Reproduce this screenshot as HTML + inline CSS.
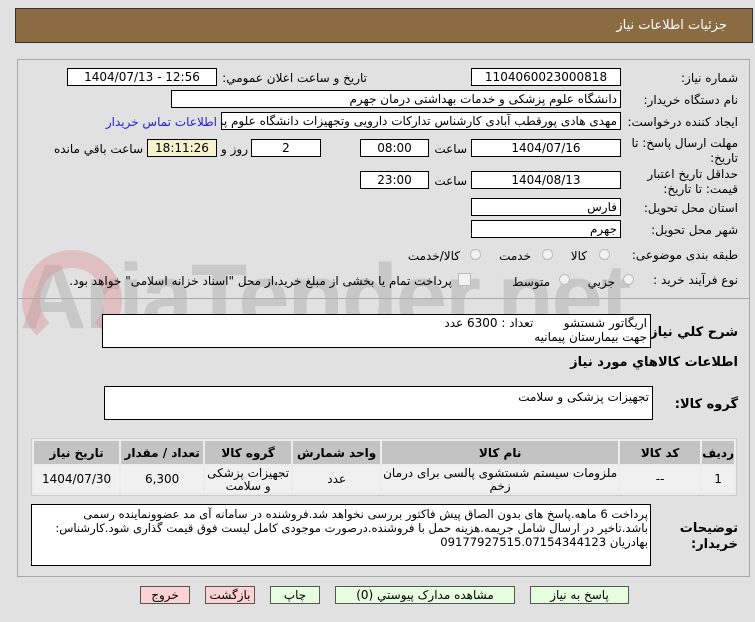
<!DOCTYPE html>
<html><head><meta charset="utf-8"><style>
*{box-sizing:border-box;margin:0;padding:0}
body{width:755px;height:622px;background:#e1e1e1;position:relative;overflow:hidden;font-family:Tahoma,"DejaVu Sans","Noto Sans CJK SC",sans-serif;font-size:12px;color:#000}
.a{position:absolute}
.box{position:absolute;background:#fff;border:1px solid #000;height:18px;line-height:16px;padding:0 3px;white-space:nowrap;overflow:hidden}
.c{text-align:center}.r{text-align:right;direction:rtl}
.l{position:absolute;direction:rtl;text-align:right;white-space:nowrap}
.btn{position:absolute;top:586px;height:18px;border:1px solid #555;background:#e6fde0;text-align:center;line-height:16px;direction:rtl}
.pink{background:#fcd2d2}
table{position:absolute;left:31px;top:438px;width:706px;border-collapse:separate;border-spacing:2px;background:#ececec;border:1px solid #ccc;direction:rtl}
th{background:#c3c3c3;height:23px;font-weight:bold;font-size:12px}
td{background:#f0f0f0;height:27px;text-align:center;line-height:13px}
.radio{position:absolute;width:11px;height:11px;border-radius:50%;border:1px solid #bbb;background:#f2f2f2}
</style></head><body>
<div class="a" style="left:15px;top:8px;width:738px;height:35px;background:#8b6b42;border:1px solid #333"></div>
<div class="l" style="right:28px;top:18px;color:#fff;font-size:13px">جزئيات اطلاعات نياز</div>
<div class="a" style="left:17px;top:59px;width:733px;height:518px;border:1px solid #aaa"></div>
<div class="a" style="left:18px;top:298px;width:731px;border-top:1px solid #aaa"></div>
<div class="a" style="left:20px;top:245px;font-family:'Liberation Sans',sans-serif;font-size:92px;font-weight:bold;color:rgba(175,175,175,.5);letter-spacing:-2px">AriaTender.net</div>
<div class="a" style="left:22px;top:250px;width:100px;height:100px;border:18px solid rgba(220,140,140,.4);border-radius:50%;border-bottom-color:transparent"></div>

<div class="l" style="right:17px;top:71px">شماره نياز:</div>
<div class="box c" style="left:471px;top:68px;width:150px">1104060023000818</div>
<div class="l" style="right:388px;top:71px">تاريخ و ساعت اعلان عمومي:</div>
<div class="box c" style="left:67px;top:68px;width:150px">1404/07/13 - 12:56</div>

<div class="l" style="right:17px;top:93px">نام دستگاه خريدار:</div>
<div class="box r" style="left:171px;top:90px;width:450px">دانشگاه علوم پزشکی و خدمات بهداشتی  درمان جهرم</div>

<div class="l" style="right:17px;top:115px">ايجاد کننده درخواست:</div>
<div class="box r" style="left:221px;top:112px;width:400px">مهدی هادی پورقطب آبادی کارشناس تدارکات دارویی وتجهیزات دانشگاه علوم پزشکی</div>
<div class="l" style="right:538px;top:115px;color:#2222dd">اطلاعات تماس خريدار</div>

<div class="l" style="right:17px;top:136px;line-height:15px">مهلت ارسال پاسخ: تا<br>تاريخ:</div>
<div class="box c" style="left:471px;top:139px;width:150px">1404/07/16</div>
<div class="l" style="right:288px;top:142px">ساعت</div>
<div class="box c" style="left:360px;top:139px;width:69px">08:00</div>
<div class="box c" style="left:251px;top:139px;width:70px">2</div>
<div class="l" style="right:507px;top:142px">روز و</div>
<div class="box c" style="left:147px;top:139px;width:70px;background:#f5f2cc">18:11:26</div>
<div class="l" style="right:612px;top:142px">ساعت باقي مانده</div>

<div class="l" style="right:17px;top:167px;line-height:15px">حداقل تاريخ اعتبار<br>قيمت: تا تاريخ:</div>
<div class="box c" style="left:471px;top:171px;width:150px">1404/08/13</div>
<div class="l" style="right:288px;top:174px">ساعت</div>
<div class="box c" style="left:360px;top:171px;width:69px">23:00</div>

<div class="l" style="right:17px;top:201px">استان محل تحويل:</div>
<div class="box r" style="left:471px;top:198px;width:150px">فارس</div>
<div class="l" style="right:17px;top:223px">شهر محل تحويل:</div>
<div class="box r" style="left:471px;top:220px;width:150px">جهرم</div>

<div class="l" style="right:17px;top:248px">طبقه بندی موضوعی:</div>
<div class="radio" style="left:599px;top:249px"></div><div class="l" style="right:168px;top:249px">کالا</div>
<div class="radio" style="left:542px;top:249px"></div><div class="l" style="right:224px;top:249px">خدمت</div>
<div class="radio" style="left:470px;top:249px"></div><div class="l" style="right:295px;top:249px">کالا/خدمت</div>

<div class="l" style="right:17px;top:273px">نوع فرآيند خريد :</div>
<div class="radio" style="left:623px;top:274px"></div><div class="l" style="right:140px;top:275px">جزيي</div>
<div class="radio" style="left:559px;top:274px"></div><div class="l" style="right:205px;top:275px">متوسط</div>
<div class="a" style="left:458px;top:273px;width:13px;height:13px;border:1px solid #bbb;background:#f2f2f2"></div>
<div class="l" style="right:303px;top:274px">پرداخت تمام يا بخشی از مبلغ خريد،از محل "اسناد خزانه اسلامی" خواهد بود.</div>

<div class="l" style="right:17px;top:325px;font-weight:bold;font-size:13px">شرح کلي نياز:</div>
<div class="box r" style="left:102px;top:314px;width:549px;height:34px;line-height:14px;padding-top:1px">اريگاتور شستشو&nbsp;&nbsp;&nbsp;&nbsp;&nbsp;&nbsp;&nbsp; تعداد : 6300  عدد<br>جهت بيمارستان پيمانيه</div>
<div class="l" style="right:17px;top:355px;font-weight:bold;font-size:13px">اطلاعات کالاهاي مورد نياز</div>
<div class="l" style="right:17px;top:397px;font-weight:bold;font-size:13px">گروه کالا:</div>
<div class="box r" style="left:104px;top:386px;width:549px;height:34px;padding-top:2px">تجهيزات پزشکی و سلامت</div>

<table>
<tr><th style="width:27px">رديف</th><th style="width:80px">کد کالا</th><th style="width:236px">نام کالا</th><th style="width:87px">واحد شمارش</th><th style="width:86px">گروه کالا</th><th style="width:82px">تعداد / مقدار</th><th>تاريخ نياز</th></tr>
<tr><td>1</td><td>--</td><td>ملزومات سیستم شستشوی پالسی برای درمان زخم</td><td>عدد</td><td>تجهیزات پزشکی و سلامت</td><td>6,300</td><td>1404/07/30</td></tr>
</table>

<div class="l" style="right:17px;top:521px;font-weight:bold;font-size:13px;line-height:16px">توضيحات<br>خريدار:</div>
<div class="box r" style="left:31px;top:504px;width:620px;height:62px;line-height:14px;white-space:normal;padding:2px 2px 0;font-size:11.6px;letter-spacing:-0.1px">پرداخت 6 ماهه.پاسخ های بدون الصاق پیش فاکتور بررسی نخواهد شد.فروشنده در سامانه آی مد عضوونماینده رسمی باشد.تاخیر در ارسال شامل جریمه.هزینه حمل با فروشنده.درصورت موجودی کامل لیست فوق قیمت گذاری شود.کارشناس: بهادریان 09177927515.07154344123</div>

<div class="btn" style="left:530px;width:99px">پاسخ به نياز</div>
<div class="btn" style="left:335px;width:180px">مشاهده مدارک پيوستي (0)</div>
<div class="btn" style="left:270px;width:50px">چاپ</div>
<div class="btn pink" style="left:205px;width:50px">بازگشت</div>
<div class="btn pink" style="left:140px;width:50px">خروج</div>
</body></html>
